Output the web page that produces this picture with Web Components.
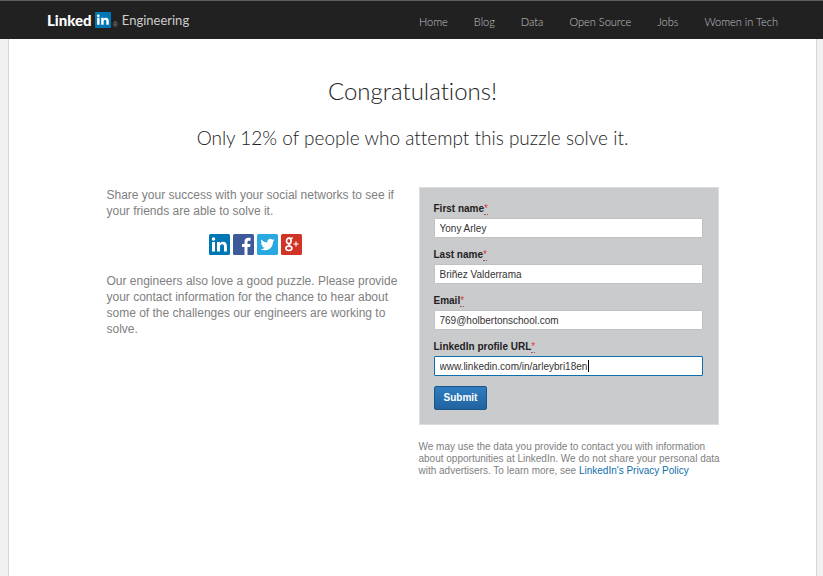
<!DOCTYPE html>
<html lang="en">
<head>
<meta charset="utf-8">
<title>LinkedIn Engineering</title>
<style>
html { height: 100%; background: #f1f1f1; }
body { margin: 0; min-height: 100%; display: flex; flex-direction: column; font-family: "Liberation Sans", Arial, sans-serif; color: #333; font-variant-ligatures: none; }
</style>
</head>
<body>
<puzzle-page></puzzle-page>
<script>
const define = (name, html, setup) => customElements.define(name, class extends HTMLElement {
  constructor() {
    super();
    const template = document.createElement('template');
    template.innerHTML = html;
    this.attachShadow({ mode: 'open' }).append(template.content.cloneNode(true));
  }
  connectedCallback() { if (setup) setup(this, this.shadowRoot); }
});

define('brand-logo', `
<style>
:host { display: block; }
a { display: flex; align-items: center; text-decoration: none; color: #fff; font-family: Lato, sans-serif; }
b { font-size: 15px; line-height: 18px; font-weight: 900; }
svg { display: block; margin-left: 3px; }
small { font: 7px/8px "Liberation Sans", sans-serif; color: #888; align-self: flex-end; margin: 0 4px 0 2px; }
span { font-size: 13px; line-height: 18px; color: #ccc; }
</style>
<a href="#"><b>Linked</b><svg width="16" height="16" viewBox="0 0 15 15" aria-hidden="true"><rect width="15" height="15" rx="1" fill="#0077b5"/><path fill="#fff" d="M2 5.5h2.3V12H2zM3.1 2.3a1.3 1.3 0 1 1 0 2.6 1.3 1.3 0 0 1 0-2.6M5.8 5.5H8v.9c.5-.7 1.200-1.100 2.200-1.100 2 0 2.700 1.300 2.700 3.200V12h-2.300V8.800c0-.9-.2-1.600-1.100-1.600S8.100 7.900 8.100 8.800V12H5.800z"/></svg><small>®</small><span>Engineering</span></a>`);

define('site-header', `
<style>
:host { display: flex; align-items: center; justify-content: space-between; height: 38px; padding: 0 45px 0 47px; background: #212121; border-top: 1px solid #5b5f5f; }
nav { display: flex; gap: 26px; padding-top: 4px; }
a { font: 300 11px/16px Lato, sans-serif; font-variant-ligatures: none; color: #c4c4c4; text-decoration: none; white-space: nowrap; }
</style>
<brand-logo></brand-logo>
<nav><a href="#">Home</a><a href="#">Blog</a><a href="#">Data</a><a href="#">Open Source</a><a href="#">Jobs</a><a href="#">Women in Tech</a></nav>`);

define('share-links', `
<style>
:host { display: flex; justify-content: center; gap: 3px; }
a, svg { display: block; }
</style>
<a href="#" aria-label="LinkedIn"><svg width="21" height="21" viewBox="0 0 21 21"><rect width="21" height="21" rx="1.500" fill="#0077b5"/><path fill="#fff" d="M3 8h3v9.500H3zM4.500 3.200a1.750 1.750 0 1 1 0 3.500 1.750 1.750 0 0 1 0-3.500M8 8h2.900v1.300c.6-1 1.600-1.600 3-1.600 3 0 4 1.800 4 4.600v5.200H15v-4.700c0-1.400-.3-2.500-1.800-2.500S11 11.500 11 12.800v4.700H8z"/></svg></a>
<a href="#" aria-label="Facebook"><svg width="21" height="21" viewBox="0 0 21 21"><rect width="21" height="21" rx="1.500" fill="#3f5a9b"/><path fill="#fff" d="M11.500 21v-8H9V9.900h2.500V7.700c0-2.600 1.500-4 3.900-4l2.200.1v2.900H16c-1.200 0-1.500.6-1.500 1.500v1.700h3l-.4 3.100h-2.600v8z"/></svg></a>
<a href="#" aria-label="Twitter"><svg width="21" height="21" viewBox="0 0 21 21"><rect width="21" height="21" rx="1.500" fill="#2aa9e0"/><path fill="#fff" d="M17.500 6.200c-.5.200-1.100.4-1.600.5.600-.4 1-.9 1.200-1.600-.6.300-1.200.6-1.800.7a2.900 2.900 0 0 0-5 2.600C7.900 8.300 5.800 7.200 4.400 5.400c-.8 1.400-.4 3 .9 3.900-.5 0-.9-.2-1.300-.4 0 1.500 1 2.600 2.300 2.900-.4.100-.9.100-1.300 0 .4 1.200 1.400 2 2.700 2-1.200.9-2.700 1.400-4.200 1.200 5.700 3.500 12.600-.4 12.500-7.200.6-.4 1.100-1 1.500-1.600"/></svg></a>
<a href="#" aria-label="Google Plus"><svg width="21" height="21" viewBox="0 0 21 21"><rect width="21" height="21" rx="1.500" fill="#d03427"/><g fill="none" stroke="#fff"><ellipse cx="7.800" cy="6.900" rx="2.300" ry="2.800" stroke-width="1.700"/><path stroke-width="1.300" d="M8 4.100h4M9.300 9.500c-2.200 1-1.800 1.900-.2 2.700"/><ellipse cx="7.900" cy="14.300" rx="3" ry="2.200" stroke-width="1.600"/><path d="M12.500 10h5M15 7.500v5" stroke-width="1.100"/></g></svg></a>`);

define('text-field', `
<style>
:host { display: grid; gap: 2px; }
label { font: bold 10px/14px "Liberation Sans", Arial, sans-serif; color: #222; }
abbr { font-weight: normal; color: #d8433c; text-decoration: none; border-bottom: 1px dotted #a55; }
div { position: relative; display: grid; }
input { box-sizing: border-box; width: 100%; min-width: 0; height: 20px; margin: 0; padding: 0 5px; border: 1px solid #bfc1c3; background: #fff; color: #333; font: 10px/14px "Liberation Sans", Arial, sans-serif; border-radius: 1px; outline: 0; }
:host([active]) input { border-color: #0d6fab; }
i { display: none; position: absolute; left: 154px; top: 4px; width: 1px; height: 12px; background: #000; }
:host([active]) i { display: block; }
</style>
<label for="field"><slot></slot><abbr title="required">*</abbr></label>
<div><input id="field" type="text"><i></i></div>`, (host, root) => {
  root.querySelector('input').value = host.getAttribute('value');
});

define('contact-form', `
<style>
:host { display: block; }
form { display: grid; gap: 10px; padding: 14px 15px 14px 14px; background: #cacbcd; border: 1px solid #dcdddf; }
button { justify-self: start; height: 24px; margin: 0; padding: 0 9px; border: 1px solid #1c5486; border-radius: 2px; background: linear-gradient(#2f7dc0, #2263a0); color: #fff; font: bold 10px/14px "Liberation Sans", Arial, sans-serif; }
</style>
<form>
<text-field value="Yony Arley">First name</text-field>
<text-field value="Briñez Valderrama">Last name</text-field>
<text-field value="769@holbertonschool.com">Email</text-field>
<text-field value="www.linkedin.com/in/arleybri18en" active>LinkedIn profile URL</text-field>
<button type="button">Submit</button>
</form>`);

define('puzzle-page', `
<style>
:host { display: flex; flex-direction: column; flex: 1; }
main { flex: 1; margin: 0 6px 0 8px; padding: 36px 16px 0; background: #fff; border: solid #d5d5d5; border-width: 0 1px; }
h1, h2, p { margin: 0; text-align: center; font-weight: 300; font-family: Lato, sans-serif; color: #222; }
h1 { font-size: 24px; line-height: 32px; }
h2 { font-size: 19px; line-height: 24px; margin-top: 19px; }
.columns { display: grid; grid-template-columns: minmax(0, 1fr) 300px; gap: 15px; max-width: 612px; margin: 37px auto 0; }
.columns p { text-align: left; font: 12px/16px "Liberation Sans", Arial, sans-serif; color: #808080; }
share-links { margin: 15px 0 18px; }
.columns .note { margin: 16px -4px 0 0; font-size: 10px; line-height: 12px; }
a { color: #0d6fab; text-decoration: none; }
</style>
<site-header></site-header>
<main>
<h1>Congratulations!</h1>
<h2>Only 12% of people who attempt this puzzle solve it.</h2>
<div class="columns">
<section><p>Share your success with your social networks to see if your friends are able to solve it.</p><share-links></share-links><p>Our engineers also love a good puzzle. Please provide your contact information for the chance to hear about some of the challenges our engineers are working to solve.</p></section>
<section><contact-form></contact-form><p class="note">We may use the data you provide to contact you with information about opportunities at LinkedIn. We do not share your personal data with advertisers. To learn more, see <a href="#">LinkedIn's Privacy Policy</a></p></section>
</div>
</main>`);
</script>
</body>
</html>
